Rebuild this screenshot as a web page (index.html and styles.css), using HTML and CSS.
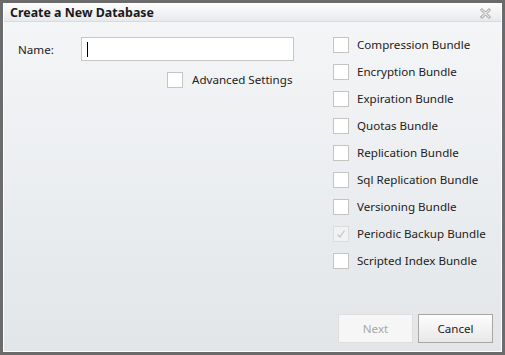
FILE: index.html
```html
<!DOCTYPE html>
<html>
<head>
<meta charset="utf-8">
<link rel="stylesheet" href="styles.css">
</head>
<body>
<div class="dialog">
  <div class="inner">
    <div class="titlebar">
      <span class="title">Create a New Database</span>
      <svg class="close" width="11" height="11" viewBox="0 0 11 11">
        <path d="M0.5 2 L2 0.5 L5.5 4 L9 0.5 L10.5 2 L7 5.5 L10.5 9 L9 10.5 L5.5 7 L2 10.5 L0.5 9 L4 5.5 Z" fill="#e6e6e6" stroke="#9a9a9a" stroke-width="1"/>
      </svg>
    </div>
    <div class="body">
      <div class="main">
        <div class="left">
          <div class="name-row">
            <label class="name-label">Name:</label>
            <div class="input"><span class="caret"></span></div>
          </div>
          <div class="adv-row">
            <span class="cb"></span>
            <span class="cb-label">Advanced Settings</span>
          </div>
        </div>
        <div class="right">
          <div class="cb-row"><span class="cb"></span><span class="cb-label">Compression Bundle</span></div>
          <div class="cb-row"><span class="cb"></span><span class="cb-label">Encryption Bundle</span></div>
          <div class="cb-row"><span class="cb"></span><span class="cb-label">Expiration Bundle</span></div>
          <div class="cb-row"><span class="cb"></span><span class="cb-label">Quotas Bundle</span></div>
          <div class="cb-row"><span class="cb"></span><span class="cb-label">Replication Bundle</span></div>
          <div class="cb-row"><span class="cb"></span><span class="cb-label">Sql Replication Bundle</span></div>
          <div class="cb-row"><span class="cb"></span><span class="cb-label">Versioning Bundle</span></div>
          <div class="cb-row"><span class="cb disabled">
            <svg width="14" height="14" viewBox="0 0 14 14"><path d="M3.5 7.5 L6 10 L10.5 3.5" fill="none" stroke="#c4c4c4" stroke-width="1.3"/></svg>
          </span><span class="cb-label">Periodic Backup Bundle</span></div>
          <div class="cb-row"><span class="cb"></span><span class="cb-label">Scripted Index Bundle</span></div>
        </div>
      </div>
      <div class="footer">
        <button class="btn btn-disabled">Next</button>
        <button class="btn">Cancel</button>
      </div>
    </div>
  </div>
</div>
</body>
</html>
```

FILE: styles.css
```css
html, body {
  margin: 0;
  padding: 0;
}
body {
  width: 505px;
  height: 355px;
  overflow: hidden;
  font-family: "Noto Sans", "DejaVu Sans", sans-serif;
  font-size: 11.6px;
  color: #222;
}
.dialog {
  box-sizing: border-box;
  width: 505px;
  height: 355px;
  border: 3px solid #6b6b6b;
}
.inner {
  box-sizing: border-box;
  height: 100%;
  border: 1px solid #ffffff;
  display: flex;
  flex-direction: column;
  background: linear-gradient(#f5f6f8, #e2e6e9);
}
.titlebar {
  height: 17px;
  border-bottom: 1px solid #d7dbdf;
  background: linear-gradient(#fcfcfd, #e7eaed);
  display: flex;
  align-items: center;
  justify-content: space-between;
  padding: 0 10px 0 6px;
}
.title {
  font-weight: bold;
  font-size: 12.4px;
  color: #1a1a1a;
  line-height: 17px;
}
.close {
  display: block;
  margin-top: 1px;
}
.body {
  flex: 1;
  display: flex;
  flex-direction: column;
  padding: 15px 8px 8px 14px;
}
.main {
  display: flex;
}
.left {
  width: 276px;
}
.name-row {
  display: flex;
  align-items: center;
  height: 24px;
}
.name-label {
  width: 63px;
  color: #222;
}
.input {
  box-sizing: border-box;
  width: 213px;
  height: 24px;
  background: #fff;
  border: 1px solid #c9c6c6;
  display: flex;
  align-items: center;
  padding-left: 5px;
}
.caret {
  display: block;
  width: 1px;
  height: 15px;
  background: #000;
}
.adv-row {
  display: flex;
  align-items: center;
  margin-top: 11px;
  padding-left: 149px;
  gap: 9px;
}
.right {
  margin-left: 39px;
  display: flex;
  flex-direction: column;
  gap: 11px;
}
.cb-row {
  display: flex;
  align-items: center;
  gap: 8px;
  height: 16px;
}
.cb {
  box-sizing: border-box;
  display: flex;
  align-items: center;
  justify-content: center;
  width: 16px;
  height: 16px;
  background: #fff;
  border: 1px solid #c6c3c3;
  flex: none;
}
.cb.disabled {
  background: #f1f2f3;
  border-color: #dcdcdc;
}
.cb-label {
  white-space: nowrap;
  color: #222;
  line-height: 16px;
}
.footer {
  margin-top: auto;
  display: flex;
  justify-content: flex-end;
  gap: 5px;
}
.btn {
  box-sizing: border-box;
  width: 75px;
  height: 29px;
  font-family: inherit;
  font-size: 11.6px;
  color: #222;
  border: 1px solid #aaa6a6;
  background: linear-gradient(#fdfdfd, #e8e8e8);
  padding: 0;
}
.btn-disabled {
  color: #a8a8a8;
  border-color: #dedede;
  background: #f6f6f6;
}
```
